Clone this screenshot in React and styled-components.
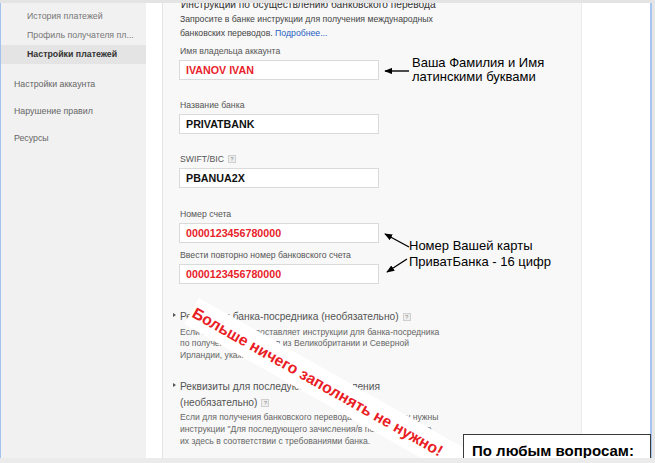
import React from "react";
import styled, { createGlobalStyle } from "styled-components";

const Global = createGlobalStyle`
  html, body { margin: 0; padding: 0; width: 655px; height: 463px; overflow: hidden; background: #fff; }
  body { font-family: "Liberation Sans", Arial, sans-serif; }
  * { box-sizing: border-box; }
`;

const Window = styled.div`
  width: 655px;
  height: 463px;
  display: flex;
  flex-direction: column;
  background: #fff;
`;

const TopBar = styled.div`
  height: 3px;
  flex: none;
  background: #e4e4e4;
`;

const BottomBar = styled.div`
  height: 5px;
  flex: none;
  background: #ebebeb;
`;

const Main = styled.div`
  flex: 1;
  display: flex;
  position: relative;
  overflow: hidden;
`;

const Sidebar = styled.nav`
  width: 146px;
  flex: none;
  border-left: 1px solid #a3c3ef;
  background: #f1f1f1;
  padding-top: 4px;
`;

const NavItem = styled.div`
  height: ${(p) => (p.$sub ? "19px" : "27px")};
  line-height: ${(p) => (p.$sub ? "19px" : "27px")};
  padding-left: ${(p) => (p.$sub ? "26px" : "13px")};
  margin-top: ${(p) => (p.$gap ? "7px" : "0")};
  font-size: 8.8px;
  color: ${(p) => (p.$active ? "#333" : p.$sub ? "#777" : "#666")};
  font-weight: ${(p) => (p.$active ? "bold" : "normal")};
  background: ${(p) => (p.$active ? "#e4e4e4" : "transparent")};
  white-space: nowrap;
`;

const Gutter = styled.div`
  width: 16px;
  flex: none;
  background: #fff;
`;

const Content = styled.section`
  width: 420px;
  flex: none;
  background: #f8f8f8;
  border-left: 1px solid #e4e4e4;
  border-right: 1px solid #ececec;
  padding-left: 16px;
`;

const RightPane = styled.div`
  width: 68px;
  flex: none;
  background: #fff;
`;

const RightEdge = styled.div`
  width: 5px;
  flex: none;
  border-left: 2px solid #a6c5f1;
  background: #e6e6e6;
`;

const Title = styled.h2`
  margin: -6px 0 0 2px;
  font-size: 10.2px;
  line-height: 15px;
  font-weight: normal;
  color: #333;
  white-space: nowrap;
`;

const Lead = styled.p`
  margin: 0 0 0 1px;
  font-size: 8.7px;
  line-height: 14px;
  color: #444;
`;

const Link = styled.a`
  color: #1f5fbf;
  text-decoration: none;
`;

const Field = styled.div`
  margin-top: ${(p) => p.$top}px;
`;

const Label = styled.div`
  font-size: 8.7px;
  line-height: 12px;
  color: #555;
  margin: 0 0 3px 1px;
  display: flex;
  align-items: center;
  gap: 4px;
`;

const Help = styled.span`
  display: inline-flex;
  width: 8px;
  height: 8px;
  align-items: center;
  justify-content: center;
  border: 1px solid #cfcfcf;
  background: #efefef;
  color: #888;
  font-size: 6px;
  line-height: 6px;
`;

const TextBox = styled.div`
  width: 200px;
  height: 20px;
  border: 1px solid #dadada;
  background: #fff;
  padding-left: 6px;
  font-size: 10.7px;
  line-height: 18px;
  font-weight: bold;
  color: ${(p) => (p.$red ? "#e8232b" : "#111")};
`;

const Section = styled.div`
  position: relative;
  margin-top: ${(p) => p.$top}px;
  margin-left: 1px;
  &::before {
    content: "";
    position: absolute;
    left: -7px;
    top: 4px;
    border-left: 3px solid #555;
    border-top: 2.5px solid transparent;
    border-bottom: 2.5px solid transparent;
  }
`;

const SectionHead = styled.div`
  font-size: 10.2px;
  line-height: 16px;
  color: #555;
  display: flex;
  flex-wrap: wrap;
  align-items: center;
  column-gap: 4px;
  width: 260px;
`;

const SectionText = styled.p`
  margin: 1.5px 0 0 0;
  font-size: 8.6px;
  line-height: 11.7px;
  color: #666;
  white-space: nowrap;
`;

const Note = styled.div`
  position: absolute;
  left: ${(p) => p.$x}px;
  top: ${(p) => p.$y}px;
  font-size: 13px;
  line-height: ${(p) => p.$lh}px;
  color: #000;
  white-space: nowrap;
`;

const Arrows = styled.svg`
  position: absolute;
  left: 0;
  top: 0;
  pointer-events: none;
`;

const Banner = styled.div`
  position: absolute;
  left: 199px;
  top: 294.5px;
  width: 330px;
  height: 30px;
  padding-left: 2px;
  transform: rotate(29.5deg);
  transform-origin: 0 0;
  background: #fff;
  color: #ea1c24;
  font-size: 15.7px;
  font-weight: bold;
  line-height: 30px;
  white-space: nowrap;
`;

const HelpBox = styled.div`
  position: absolute;
  left: 463px;
  top: 431px;
  width: 188px;
  height: 40px;
  background: #fff;
  border: 1px solid #3a3a3a;
  padding: 8px 0 0 8px;
  font-size: 15px;
  line-height: 16px;
  font-weight: bold;
  color: #000;
  white-space: nowrap;
`;

const subNav = ["История платежей", "Профиль получателя пл...", "Настройки платежей"];
const topNav = ["Настройки аккаунта", "Нарушение правил", "Ресурсы"];

export default function App() {
  return (
    <>
      <Global />
      <Window>
        <TopBar />
        <Main>
          <Sidebar>
            {subNav.map((t, i) => (
              <NavItem key={t} $sub $active={i === 2}>
                {t}
              </NavItem>
            ))}
            {topNav.map((t, i) => (
              <NavItem key={t} $gap={i === 0}>
                {t}
              </NavItem>
            ))}
          </Sidebar>
          <Gutter />
          <Content>
            <Title>Инструкции по осуществлению банковского перевода</Title>
            <Lead>
              Запросите в банке инструкции для получения международных
              <br />
              банковских переводов. <Link>Подробнее...</Link>
            </Lead>
            <Field $top={5}>
              <Label>Имя владельца аккаунта</Label>
              <TextBox $red>IVANOV IVAN</TextBox>
            </Field>
            <Field $top={19}>
              <Label>Название банка</Label>
              <TextBox>PRIVATBANK</TextBox>
            </Field>
            <Field $top={19}>
              <Label>
                SWIFT/BIC <Help>?</Help>
              </Label>
              <TextBox>PBANUA2X</TextBox>
            </Field>
            <Field $top={20}>
              <Label>Номер счета</Label>
              <TextBox $red>0000123456780000</TextBox>
            </Field>
            <Field $top={6}>
              <Label>Ввести повторно номер банковского счета</Label>
              <TextBox $red>0000123456780000</TextBox>
            </Field>
            <Section $top={25}>
              <SectionHead>
                <span>Реквизиты банка-посредника (необязательно)</span>
                <Help>?</Help>
              </SectionHead>
              <SectionText>
                Если ваш банк предоставляет инструкции для банка-посредника
                <br />
                по получению переводов из Великобритании и Северной
                <br />
                Ирландии, укажите их здесь.
              </SectionText>
            </Section>
            <Section $top={17}>
              <SectionHead>
                <span>Реквизиты для последующего зачисления</span>
                <span>(необязательно)</span>
                <Help>?</Help>
              </SectionHead>
              <SectionText>
                Если для получения банковского перевода вашему банку нужны
                <br />
                инструкции "Для последующего зачисления/в пользу", укажите
                <br />
                их здесь в соответствии с требованиями банка.
              </SectionText>
            </Section>
          </Content>
          <RightPane />
          <RightEdge />

          <Note $x={412} $y={53} $lh={14}>
            Ваша Фамилия и Имя
            <br />
            латинскими буквами
          </Note>
          <Note $x={409} $y={235} $lh={16}>
            Номер Вашей карты
            <br />
            ПриватБанка - 16 цифр
          </Note>
          <Arrows width="655" height="455" viewBox="0 0 655 455">
            <defs>
              <marker id="head" viewBox="0 0 10 8" refX="9" refY="4" markerWidth="8" markerHeight="6.4" markerUnits="userSpaceOnUse" orient="auto">
                <path d="M0 0 L10 4 L0 8 Z" fill="#000" />
              </marker>
            </defs>
            <line x1="409" y1="68" x2="385" y2="68" stroke="#000" strokeWidth="1.4" markerEnd="url(#head)" />
            <line x1="409" y1="244" x2="385" y2="231" stroke="#000" strokeWidth="1.4" markerEnd="url(#head)" />
            <line x1="407" y1="256" x2="387" y2="269" stroke="#000" strokeWidth="1.4" markerEnd="url(#head)" />
          </Arrows>
          <Banner>Больше ничего заполнять не нужно!</Banner>
          <HelpBox>По любым вопросам:</HelpBox>
        </Main>
        <BottomBar />
      </Window>
    </>
  );
}
